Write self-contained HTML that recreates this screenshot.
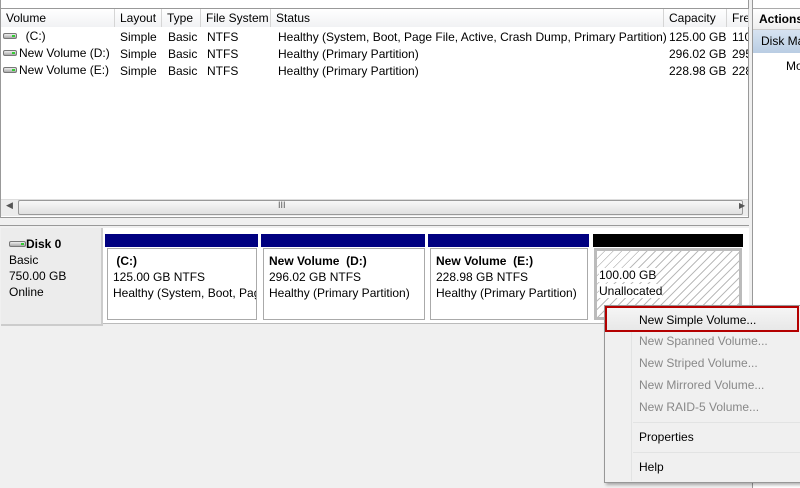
<!DOCTYPE html>
<html><head><style>
*{margin:0;padding:0;box-sizing:border-box}
body{width:800px;height:488px;background:#f0f0f0;font-family:"Liberation Sans",sans-serif;font-size:12px;color:#000;position:relative;overflow:hidden}
.a{position:absolute;white-space:nowrap}
.hd{position:absolute;top:9px;height:18px;border-right:1px solid #d5d5d5;padding:2px 0 0 5px;background:linear-gradient(#fff,#f1f2f4);white-space:nowrap}
.ico{display:inline-block;width:14px;height:6px;border:1px solid #777;border-radius:2px;background:linear-gradient(#eee,#aaa);position:relative;vertical-align:1px;margin-right:2px}
.ico:after{content:"";position:absolute;right:1px;top:1px;width:3px;height:2px;background:#3c3}
.vol{position:absolute;top:248px;height:72px;border:1px solid #aaa;background:#fff;padding:4px 0 0 5px;line-height:16px;overflow:hidden;white-space:nowrap}
.mi{position:absolute;left:639px;color:#888}
</style></head><body>
<div class="a" style="left:0;top:0;width:749px;height:218px;background:#fff;border:1px solid #999;border-top:none"></div>
<div class="a" style="left:0;top:8px;width:749px;height:1px;background:#999"></div>
<div class="hd" style="left:1px;width:114px">Volume</div>
<div class="hd" style="left:115px;width:47px">Layout</div>
<div class="hd" style="left:162px;width:39px">Type</div>
<div class="hd" style="left:201px;width:70px">File System</div>
<div class="hd" style="left:271px;width:393px">Status</div>
<div class="hd" style="left:664px;width:63px">Capacity</div>
<div class="hd" style="left:727px;width:22px;overflow:hidden">Free</div>
<div class="a" style="left:3px;top:29px"><span class="ico"></span>&nbsp; (C:)</div>
<div class="a" style="left:3px;top:46px"><span class="ico"></span>New Volume (D:)</div>
<div class="a" style="left:3px;top:63px"><span class="ico"></span>New Volume (E:)</div>
<div class="a" style="left:120px;top:29px;line-height:17px">Simple<br>Simple<br>Simple</div>
<div class="a" style="left:168px;top:29px;line-height:17px">Basic<br>Basic<br>Basic</div>
<div class="a" style="left:207px;top:29px;line-height:17px">NTFS<br>NTFS<br>NTFS</div>
<div class="a" style="left:278px;top:29px;line-height:17px">Healthy (System, Boot, Page File, Active, Crash Dump, Primary Partition)<br>Healthy (Primary Partition)<br>Healthy (Primary Partition)</div>
<div class="a" style="left:669px;top:29px;line-height:17px">125.00 GB<br>296.02 GB<br>228.98 GB</div>
<div class="a" style="left:732px;top:29px;line-height:17px;width:16px;overflow:hidden">110<br>295<br>228</div>
<div class="a" style="left:1px;top:199px;width:747px;height:17px;background:#ececec;border-top:1px solid #ddd"></div>
<div class="a" style="left:18px;top:200px;width:725px;height:15px;border:1px solid #999;border-radius:2px;background:linear-gradient(#f8f8f8,#e0e0e0)"></div>
<div class="a" style="left:278px;top:200px;font-size:9px;color:#555">III</div>
<div class="a" style="left:6px;top:200px;font-size:9px;color:#555">◀</div>
<div class="a" style="left:739px;top:201px;font-size:8px;color:#555">▶</div>
<div class="a" style="left:0;top:225px;width:750px;height:1px;background:#999"></div>
<div class="a" style="left:1px;top:228px;width:102px;height:98px;border-right:2px solid #ccc;border-bottom:2px solid #ccc;background:#ececec"></div>
<div class="a" style="left:9px;top:236px;line-height:16px"><span class="ico" style="width:17px;margin-right:0"></span><b>Disk 0</b><br>Basic<br>750.00 GB<br>Online</div>
<div class="a" style="left:103px;top:228px;width:646px;height:96px;background:#fff;border-bottom:1px solid #bbb"></div>
<div class="a" style="left:105px;top:234px;width:153px;height:13px;background:#000080"></div>
<div class="a" style="left:261px;top:234px;width:164px;height:13px;background:#000080"></div>
<div class="a" style="left:428px;top:234px;width:161px;height:13px;background:#000080"></div>
<div class="a" style="left:593px;top:234px;width:150px;height:13px;background:#000"></div>
<div class="vol" style="left:107px;width:150px"><b>&nbsp;(C:)</b><br>125.00 GB NTFS<br>Healthy (System, Boot, Page</div>
<div class="vol" style="left:263px;width:162px"><b>New Volume&nbsp; (D:)</b><br>296.02 GB NTFS<br>Healthy (Primary Partition)</div>
<div class="vol" style="left:430px;width:158px"><b>New Volume&nbsp; (E:)</b><br>228.98 GB NTFS<br>Healthy (Primary Partition)</div>
<div class="vol" style="left:594px;width:148px;border:3px solid #bbb;padding:16px 0 0 2px;background:repeating-linear-gradient(135deg,#fff 0 5px,#bbb 5px 6px)"><span style="background:#fff">100.00 GB</span><br><span style="background:#fff">Unallocated</span></div>
<div class="a" style="left:749px;top:0;width:3px;height:488px;background:#f0f0f0"></div>
<div class="a" style="left:752px;top:0;width:48px;height:488px;background:#fff;border-left:1px solid #999"></div>
<div class="a" style="left:753px;top:8px;width:47px;height:22px;background:linear-gradient(#fff,#eee);border-top:1px solid #aaa;border-bottom:1px solid #ccc;padding:3px 0 0 6px;font-weight:bold;overflow:hidden">Actions</div>
<div class="a" style="left:753px;top:30px;width:47px;height:23px;background:linear-gradient(#d7e3f1,#b9cde3);padding:4px 0 0 8px;overflow:hidden">Disk Ma</div>
<div class="a" style="left:786px;top:59px">Mo</div>
<div class="a" style="left:604px;top:305px;width:198px;height:178px;background:#f0f0f0;border:1px solid #979797;box-shadow:2px 2px 3px rgba(0,0,0,.3)"></div>
<div class="a" style="left:631px;top:306px;width:1px;height:175px;background:#e2e3e3"></div>
<div class="a" style="left:605px;top:306px;width:194px;height:26px;border:2px solid #b40000;background:linear-gradient(#f5f5f5,#e8e8e8)"></div>
<div class="a" style="left:639px;top:313px">New Simple Volume...</div>
<div class="mi" style="top:334px">New Spanned Volume...</div>
<div class="mi" style="top:356px">New Striped Volume...</div>
<div class="mi" style="top:378px">New Mirrored Volume...</div>
<div class="mi" style="top:400px">New RAID-5 Volume...</div>
<div class="a" style="left:633px;top:422px;width:167px;height:1px;background:#e2e3e3"></div>
<div class="a" style="left:639px;top:430px">Properties</div>
<div class="a" style="left:633px;top:452px;width:167px;height:1px;background:#e2e3e3"></div>
<div class="a" style="left:639px;top:460px">Help</div>
</body></html>
